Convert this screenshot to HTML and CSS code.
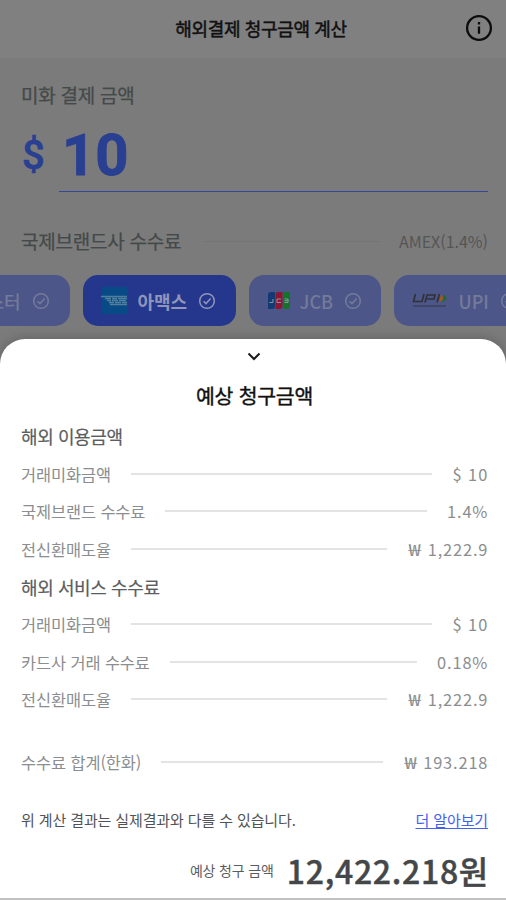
FILE: index.html
```html
<!DOCTYPE html>
<html lang="ko">
<head>
<meta charset="utf-8">
<title>해외결제 청구금액 계산</title>
<link rel="stylesheet" href="styles.css">
</head>
<body>
<svg class="defs" width="0" height="0"><symbol id="check" viewBox="0 0 18 18"><circle cx="9" cy="9" r="7.3"/><path d="M5.6 9.2 8 11.6 12.6 6.4"/></symbol></svg>
<header class="header">
  <h1>해외결제 청구금액 계산</h1>
  <svg class="info" viewBox="0 0 28 28"><circle cx="14" cy="14" r="11.9"/><path d="M14 12.5v7.2M14 8v2.4"/></svg>
</header>
<main class="main">
  <div class="label">미화 결제 금액</div>
  <div class="amount"><span class="currency">$</span><span class="input">10</span></div>
  <div class="brand-row"><span class="label">국제브랜드사 수수료</span><i class="dim-line"></i><span class="brand-value">AMEX(1.4%)</span></div>
  <div class="chips">
    <div class="chip master"><span>스터</span><svg class="check"><use href="#check"/></svg></div>
    <div class="chip amex active">
      <svg class="logo-amex" viewBox="0 0 27 27"><path fill="#074a86" d="M1 0h26v27H1z"/><path class="mark" d="M0 9.500h26M4 11.500h6m1 0h5m1 0h9M6 13.500h4m1 0h6m1 0h7M8 15.500h5m1 0h6m1 0h5M9 17.500h17"/></svg>
      <span>아맥스</span><svg class="check"><use href="#check"/></svg>
    </div>
    <div class="chip jcb">
      <svg class="logo-jcb" viewBox="0 0 22 17"><path fill="#123b76" d="M3 0h4v14q0 3-3 3H0V3q0-3 3-3"/><path fill="#8d1730" d="M10.500 0h4v14q0 3-3 3h-4V3q0-3 3-3"/><path fill="#147427" d="M18 0h4v14q0 3-3 3h-4V3q0-3 3-3"/><path class="mark" d="M1.500 10.500H5V7M13 7H9v3.500h4M16.500 7H20v3.500h-3.500M16.500 8.700h4"/></svg>
      <span>JCB</span><svg class="check"><use href="#check"/></svg>
    </div>
    <div class="chip upi">
      <svg class="logo-upi" viewBox="0 0 36 15"><path class="mark" d="M3.500 1 1.500 8.500H10L12 1M13 9.500 15 2h8l-1 4h-7M27.500 1 25 9.500"/><path class="base" d="M1 13h33"/><path fill="#a05a1c" d="m29 1 3 4.500-5 4.500z"/><path fill="#25683b" d="m32 1 3 4.500-5 4.500z"/></svg>
      <span>UPI</span><svg class="check"><use href="#check"/></svg>
    </div>
  </div>
</main>
<section class="sheet">
  <svg class="chevron" viewBox="0 0 14 9"><path d="m1.500 1.500 5.500 5.500 5.500-5.500"/></svg>
  <h2>예상 청구금액</h2>
  <h3>해외 이용금액</h3>
  <div class="row"><span>거래미화금액</span><i></i><b class="usd">$ 10</b></div>
  <div class="row"><span>국제브랜드 수수료</span><i></i><b>1.4%</b></div>
  <div class="row"><span>전신환매도율</span><i></i><b><em>₩</em> 1,222.9</b></div>
  <h3>해외 서비스 수수료</h3>
  <div class="row"><span>거래미화금액</span><i></i><b class="usd">$ 10</b></div>
  <div class="row"><span>카드사 거래 수수료</span><i></i><b>0.18%</b></div>
  <div class="row"><span>전신환매도율</span><i></i><b><em>₩</em> 1,222.9</b></div>
  <div class="row sum"><span>수수료 합계(한화)</span><i></i><b><em>₩</em> 193.218</b></div>
  <div class="note"><span>위 계산 결과는 실제결과와 다를 수 있습니다.</span><a>더 알아보기</a></div>
  <div class="total"><span>예상 청구 금액</span><strong>12,422.218원</strong></div>
</section>
</body>
</html>
```

FILE: styles.css
```css
* { box-sizing: border-box; }
body {
  margin: 0;
  width: 506px;
  height: 900px;
  overflow: hidden;
  background: #7b7b7b;
  font-family: "Noto Sans CJK KR", sans-serif;
  white-space: nowrap;
  display: flex;
  flex-direction: column;
}
.defs { position: absolute; }
svg { fill: none; flex: none; }
h1, h2, h3 { margin: 0; }
.header {
  height: 58px;
  flex: none;
  background: #808080;
  display: grid;
  grid-template-columns: 1fr auto 1fr;
  align-items: center;
  padding: 0 13px 2px 29px;
}
.header h1 { grid-column: 2; font-size: 18px; letter-spacing: -.35px; line-height: 26px; font-weight: 400; color: #111; -webkit-text-stroke: .5px #111; }
.info { width: 28px; height: 28px; justify-self: end; stroke: #0c0c0c; stroke-width: 2.3; }
.main { height: 281px; flex: none; padding: 22px 0 0 21px; overflow: hidden; }
.label { font-size: 19px; letter-spacing: -.25px; line-height: 30px; font-weight: 400; color: #444949; -webkit-text-stroke: .25px #444949; }
.amount { display: flex; height: 82px; padding-right: 18px; color: #293f91; font-family: Roboto, sans-serif; font-weight: 700; }
.currency { width: 38px; padding-left: 1px; font-size: 40px; font-weight: 500; line-height: 91px; -webkit-text-stroke: .6px #293f91; }
.input { flex: 1; border-bottom: 1px solid #33489a; padding-left: 3px; font-size: 58px; line-height: 90px; -webkit-text-stroke: .8px #293f91; }
.brand-row { display: flex; align-items: center; height: 30px; margin-top: 34px; padding-right: 18px; }
.dim-line { flex: 1; height: 1px; margin: 0 18px 0 22px; background: #757575; }
.brand-value { font-size: 16px; color: #555; }
.chips { display: flex; gap: 13px; margin: 19px 0 0 -21px; }
.chip {
  height: 51px;
  flex: none;
  border-radius: 15px;
  background: #4c5688;
  color: #747b9a;
  display: flex;
  align-items: center;
  font-size: 18px;
  font-weight: 500;
}
.active { background: #25368d; color: #8f96b8; font-weight: 700; }
.master { width: 69.5px; padding-right: 20px; justify-content: flex-end; border-radius: 0 15px 15px 0; }
.amex { width: 153px; padding-left: 18px; }
.jcb { width: 132px; padding-left: 19px; }
.upi { width: 151px; padding-left: 18px; }
.check { width: 18px; height: 18px; margin-left: 11px; stroke: currentColor; stroke-width: 1.5; }
.logo-amex { width: 27px; height: 27px; margin-right: 10px; }
.logo-jcb { width: 22px; height: 17px; margin-right: 10px; }
.logo-upi { width: 36px; height: 15px; margin-right: 11px; }
.logo-amex .mark { stroke: #527f9e; stroke-width: 1.4; }
.logo-jcb .mark { stroke: #8994a5; stroke-width: 1; }
.logo-upi .mark { stroke: #303036; stroke-width: 1.6; }
.logo-upi .base { stroke: #303440; stroke-width: .9; }
.sheet {
  height: 561px;
  flex: none;
  background: #fff;
  border-radius: 25px 25px 0 0;
  border-bottom: 2px solid #c2c2c2;
  box-shadow: 0 -1px 12px #0003;
  padding: 13px 18px 0 21px;
  display: flex;
  flex-direction: column;
}
.chevron { width: 14px; height: 9px; align-self: center; margin-right: 1px; stroke: #1b1b1b; stroke-width: 2; }
h2 { align-self: center; margin-top: 19px; font-size: 20.5px; letter-spacing: -.25px; line-height: 30px; font-weight: 400; color: #111; -webkit-text-stroke: .4px #111; }
h3 { height: 38px; font-size: 18px; letter-spacing: -.4px; line-height: 38px; font-weight: 400; color: #5a5d61; -webkit-text-stroke: .2px #5a5d61; }
h2 + h3 { margin-top: 7px; }
.row { display: flex; align-items: center; height: 37.5px; color: #8b8e90; font-size: 16.4px; line-height: 24px; }
.row span { letter-spacing: -.1px; }
.row i { height: 2px; flex: 1; margin: 0 20px; background: #e3e3e3; }
.row b { font-weight: 400; letter-spacing: .85px; margin-right: -.3px; }
.row .usd { letter-spacing: 1px; }
.row em { display: inline-block; font-style: normal; transform: scaleX(1.35); transform-origin: right; margin-left: 5px; }
.sum { margin-top: 25px; }
.note { display: flex; justify-content: space-between; margin-top: 26px; height: 26px; line-height: 26px; font-size: 15px; letter-spacing: -.12px; color: #505356; }
.note a { color: #4361f1; text-decoration: underline; text-underline-offset: 2px; }
.total { display: flex; justify-content: flex-end; align-items: center; height: 46px; margin-top: 14px; color: #444749; }
.total span { font-size: 14px; letter-spacing: -.15px; margin-right: 13px; color: #5a5d60; }
.total strong { font-size: 32px; line-height: 46px; font-weight: 500; letter-spacing: .7px; margin-right: -1px; -webkit-text-stroke: .4px #444749; }
```
